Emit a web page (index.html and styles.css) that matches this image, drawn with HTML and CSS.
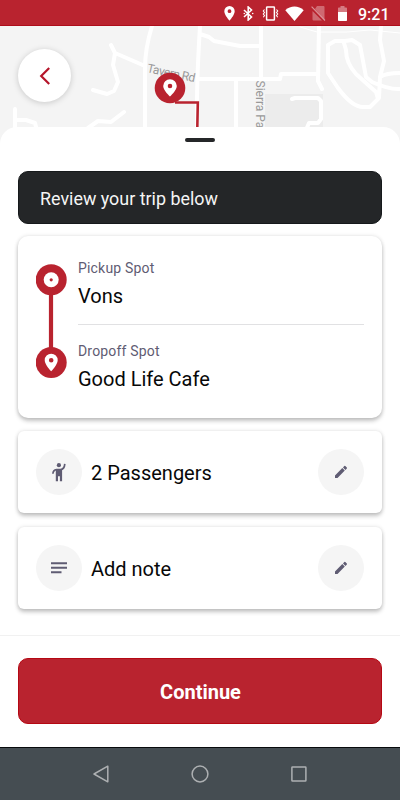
FILE: index.html
```html
<!DOCTYPE html>
<html lang="en">
<head>
<meta charset="utf-8">
<title>Review your trip</title>
<link rel="stylesheet" href="styles.css">
</head>
<body>
<div class="screen">
  <header class="status">
    <svg class="pin-mini" width="11" height="15" viewBox="0 0 11 15"><path fill="#fff" fill-rule="evenodd" d="M5.500 0A5.200 5.200 0 0 0 .3 5.200C.3 9 5.500 14.600 5.500 14.600S10.700 9 10.700 5.200A5.200 5.200 0 0 0 5.500 0Zm0 3.300a1.900 1.900 0 1 1 0 3.800 1.900 1.900 0 0 1 0-3.800Z"/></svg>
    <svg class="bluetooth" width="11" height="15" viewBox="0 0 11 15"><path fill="none" stroke="#fff" stroke-width="1.600" d="M1 4l7.500 7-3.300 3V1l3.300 3L1 11"/><circle cx="1.300" cy="7.500" r=".8" fill="#fff"/><circle cx="9.700" cy="7.500" r=".8" fill="#fff"/></svg>
    <svg class="vibrate" width="17" height="15" viewBox="0 0 17 15"><g fill="none" stroke="#fff"><rect x="4.600" y="1" width="7.800" height="13" rx=".6" stroke-width="1.500"/><path stroke-width="1.100" d="M2.500 3.500L1.300 5l1.200 1.500L1.300 8l1.200 1.500-1.200 1.700M14.500 3.500L15.700 5l-1.200 1.500L15.700 8l-1.200 1.500 1.200 1.700"/></g></svg>
    <svg class="wifi" width="19" height="15" viewBox="0 0 19 15"><path fill="#fff" d="M.3 4.200C5.500-.6 13.500-.6 18.700 4.200L9.500 15Z"/></svg>
    <svg class="sim" width="15" height="17" viewBox="0 0 15 17"><path fill="#fff" opacity=".32" d="M6 1h6.500q1 0 1 1v12.500L4 4ZM1.500 6l9.500 9.500H2.500q-1 0-1-1Z"/><path stroke="#fff" opacity=".5" stroke-width="1.100" d="M.6 1.600L14 15.500"/></svg>
    <svg class="battery" width="9" height="15" viewBox="0 0 9 15"><path fill="#fff" opacity=".4" d="M2.500 0h4v1.500h1.700q.8 0 .8.800V6H0V2.300q0-.8.800-.8h1.700Z"/><path fill="#fff" d="M0 6h9v8.200q0 .8-.8.800H.8Q0 15 0 14.200Z"/></svg>
    <span class="time">9:21</span>
  </header>

  <section class="map">
    <svg class="streets" width="400" height="122" viewBox="0 26 400 122">
      <rect y="26" width="400" height="122" fill="#f4f4f4"/>
      <path fill="#ececec" d="M265 94h58v54h-58z"/>
      <g fill="none" stroke="#fff" stroke-width="4" stroke-linejoin="round" stroke-linecap="round">
        <path d="M152 26Q145 49 145 68V150M200 26Q197 75 197 105V150M145 66L115 53M111 45L115 53 113 65 118 82 114 91 107 94 93 90M15 109V135M15 120H26L35 123 38 135M88 128L98 121 111 122 124 112M200 34L209 37 214 41 240 46H261M261 26V78M200 79H280L281 74H318M319 26L318 81 322 89M236 79V130M292 99L295 98H318L321 101V119L318 123H309L306 130"/>
        <path d="M328 45L335 41H345L352 40 360 45 366 77 372 82Q390 90 400 89M328 45V73L338 88Q352 107 363 107H370L378 99 376 92 356 74Q346 63 346 50L344 43M381 26L380 40 384 61 380 77 379 98M380 77Q386 73 400 73"/>
        <path stroke-width="1" d="M300 27L317 32 347 32 370 30 400 33"/>
      </g>
      <g class="street-name">
        <text transform="translate(146.500 72) rotate(12)" textLength="49">Tavern Rd</text>
        <text transform="translate(255.500 80.500) rotate(90)">Sierra Park</text>
      </g>
      <path fill="none" stroke="#b9232f" stroke-width="2.600" d="M175 102.500H197.800L197.300 128"/>
      <circle cx="170" cy="88" r="15.300" fill="#b9232f"/>
      <path fill="#fff" fill-rule="evenodd" d="M170 79.200A6.800 6.800 0 0 0 163.200 86C163.200 90.500 170 96.500 170 96.500S176.800 90.500 176.800 86A6.800 6.800 0 0 0 170 79.200Zm0 4.500a2.300 2.300 0 1 1 0 4.600 2.300 2.300 0 0 1 0-4.600Z"/>
    </svg>
    <button class="back" aria-label="Back"><svg width="12" height="18" viewBox="0 0 12 18"><path fill="none" stroke="#b5152a" stroke-width="2.200" d="M10.200 1L2.200 9l8 8"/></svg></button>
  </section>

  <main class="sheet">
    <div class="handle"></div>
    <h1 class="banner">Review your trip below</h1>

    <section class="card trip">
      <svg class="route" width="32" height="114" viewBox="0 0 32 114">
        <path stroke="#b9232f" stroke-width="4.200" d="M15 28V88"/>
        <circle cx="15.200" cy="15.800" r="15.500" fill="#b9232f"/>
        <circle cx="15.200" cy="15.800" r="7.500" fill="#fff"/>
        <circle cx="15.200" cy="15.800" r="1.600" fill="#b9232f"/>
        <circle cx="15.200" cy="98.500" r="15.500" fill="#b9232f"/>
        <path fill="#fff" fill-rule="evenodd" d="M15.200 89.700A6.500 6.500 0 0 0 8.700 96.200C8.700 100.700 15.200 107.200 15.200 107.200S21.700 100.700 21.700 96.200A6.500 6.500 0 0 0 15.200 89.700Zm0 4.300a2.300 2.300 0 1 1 0 4.600 2.300 2.300 0 0 1 0-4.600Z"/>
      </svg>
      <div class="stops">
        <div class="stop"><div class="label">Pickup Spot</div><div class="place">Vons</div></div>
        <div class="stop"><div class="label">Dropoff Spot</div><div class="place">Good Life Cafe</div></div>
      </div>
    </section>

    <section class="card option">
      <span class="disc"><svg width="16" height="20" viewBox="0 0 16 20"><path fill="none" stroke="#5f5c73" stroke-width="1.700" d="M1.900 11.800Q2.100 8 5.500 7.700H9.500Q13.400 7.300 13.800 1.900"/><circle cx="7.900" cy="3.200" r="2.100" fill="#5f5c73"/><path fill="#5f5c73" d="M4.800 6.900h6.300v12.300H8.900v-5H7v5H4.800Z"/></svg></span>
      <span class="text passengers">2 Passengers</span>
      <button class="disc edit" aria-label="Edit passengers"><svg width="14" height="14" viewBox="0 0 14 14"><path fill="#5f5c73" d="M1 10.400L8.300 3.100l2.500 2.500-7.300 7.300H1ZM9 2.400L10.300 1.100q.5-.5 1 0l1.500 1.500q.5.500 0 1L11.500 4.900Z"/></svg></button>
    </section>

    <section class="card option">
      <span class="disc"><svg width="16" height="12" viewBox="0 0 16 12"><path stroke="#5f5c73" stroke-width="1.900" d="M0 1.300h16M0 5.800h16M0 10.300h10.500"/></svg></span>
      <span class="text">Add note</span>
      <button class="disc edit" aria-label="Edit note"><svg width="14" height="14" viewBox="0 0 14 14"><path fill="#5f5c73" d="M1 10.400L8.300 3.100l2.500 2.500-7.300 7.300H1ZM9 2.400L10.300 1.100q.5-.5 1 0l1.500 1.500q.5.500 0 1L11.500 4.900Z"/></svg></button>
    </section>

    <footer class="actions"><button class="continue">Continue</button></footer>
  </main>

  <nav class="nav">
    <svg width="18" height="18" viewBox="0 0 18 18"><path d="M15.800 1.200V16.800L2 9Z"/></svg>
    <svg width="18" height="18" viewBox="0 0 18 18"><circle cx="9" cy="9" r="7.900"/></svg>
    <svg width="18" height="18" viewBox="0 0 18 18"><rect x="1.900" y="2" width="14" height="14" rx=".6"/></svg>
  </nav>
</div>
</body>
</html>
```
FILE: styles.css
```css
* { box-sizing: border-box; }
body { margin: 0; background: #fff; font-family: Roboto, "Liberation Sans", sans-serif; }
button { border: 0; padding: 0; font: inherit; }
svg { display: block; flex: none; }
.screen { width: 400px; height: 800px; display: flex; flex-direction: column; overflow: hidden; }

.status { height: 26px; flex: none; display: flex; align-items: center; justify-content: flex-end; padding: 1px 12px 0 0; background: #b9232f; border-bottom: 1px solid #ae0d1b; color: #fff; }
.bluetooth { margin-left: 8px; }
.vibrate { margin-left: 8px; }
.wifi { margin-left: 6px; }
.sim { margin-left: 7px; }
.battery { margin-left: 12px; }
.time { width: 30px; margin-left: 11px; font-size: 16px; font-weight: 500; line-height: 26px; padding-top: 3px; white-space: nowrap; }

.map { position: relative; height: 101px; flex: none; }
.street-name { font-size: 12px; fill: #999; }
.back { position: absolute; left: 18px; top: 23px; width: 53px; height: 53px; border-radius: 50%; background: #fff; box-shadow: 0 1px 6px rgba(0,0,0,.18); display: flex; align-items: center; justify-content: center; }

.sheet { position: relative; height: 620px; flex: none; padding: 11px 18px 0; background: #fff; border-radius: 17px 17px 0 0; }
.handle { width: 30px; height: 4px; margin: 0 auto 29px; border-radius: 2px; background: #252729; }
.banner { height: 53px; margin: 0 0 12px; padding-left: 21px; border-radius: 10px; background: #242628; border: 1px solid #16191b; color: #f5f5f5; font-size: 17.9px; font-weight: 400; line-height: 53px; }
.card { background: #fff; box-shadow: 0 3px 4px rgba(0,0,0,.22), 0 0 4px rgba(0,0,0,.12); }
.trip { height: 182px; border-radius: 10px; display: flex; padding: 28px 18px 0; }
.route { margin-right: 10px; }
.stops { flex: 1; margin-top: -5px; }
.stop { height: 65px; }
.stop + .stop { border-top: 1px solid #e1e1e3; padding-top: 17px; height: 83px; }
.label { font-size: 14px; letter-spacing: .18px; line-height: 18px; color: #5f5c73; }
.place { margin-top: 7px; font-size: 20px; line-height: 24px; color: #080808; }
.option { height: 82px; margin-top: 13px; padding: 0 18px; border-radius: 6px; display: flex; align-items: center; }
.option + .option { margin-top: 14px; }
.disc { width: 46px; height: 46px; flex: none; border-radius: 50%; background: #f5f5f5; display: flex; align-items: center; justify-content: center; }
.text { margin-left: 9px; padding-top: 1px; font-size: 20px; line-height: 24px; color: #080808; }
.edit { margin-left: auto; }
.actions { margin: 26px -18px 0; padding: 22px 18px 0; border-top: 1px solid #f1f1f1; }
.continue { display: block; width: 100%; height: 66px; border-radius: 10px; border: 1px solid #b50813; background: #b9232f; color: #fff; font-size: 20px; font-weight: 700; padding: 2px 0 0 1px; }

.nav { height: 53px; flex: none; background: #454d52; border-top: 1px solid #080b0d; display: flex; justify-content: center; gap: 81px; padding-top: 17px; }
.nav svg { fill: none; stroke: #adb0b2; stroke-width: 1.5; stroke-linejoin: round; }
```
